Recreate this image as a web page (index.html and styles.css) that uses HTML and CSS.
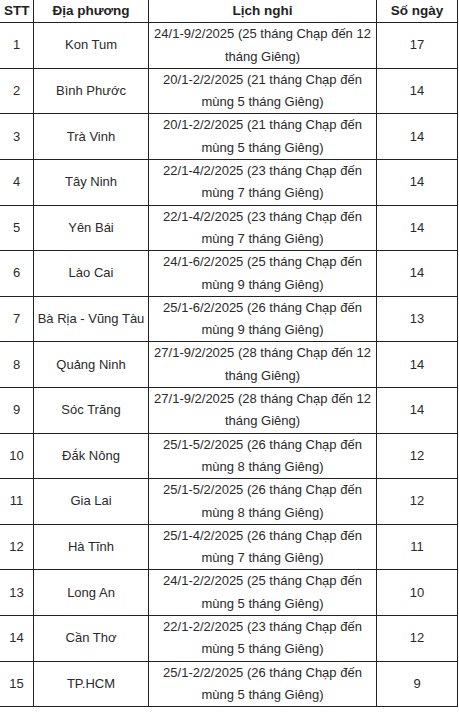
FILE: index.html
```html
<!DOCTYPE html>
<html lang="vi">
<head>
<meta charset="utf-8">
<link rel="stylesheet" href="styles.css">
</head>
<body>
<table class="tbl">
<colgroup>
<col class="c1"><col class="c2"><col class="c3"><col class="c4">
</colgroup>
<thead>
<tr><th>STT</th><th>Địa phương</th><th>Lịch nghỉ</th><th>Số ngày</th></tr>
</thead>
<tbody>
<tr><td>1</td><td>Kon Tum</td><td>24/1-9/2/2025 (25 tháng Chạp đến 12 tháng Giêng)</td><td>17</td></tr>
<tr><td>2</td><td>Bình Phước</td><td>20/1-2/2/2025 (21 tháng Chạp đến mùng 5 tháng Giêng)</td><td>14</td></tr>
<tr><td>3</td><td>Trà Vinh</td><td>20/1-2/2/2025 (21 tháng Chạp đến mùng 5 tháng Giêng)</td><td>14</td></tr>
<tr><td>4</td><td>Tây Ninh</td><td>22/1-4/2/2025 (23 tháng Chạp đến mùng 7 tháng Giêng)</td><td>14</td></tr>
<tr><td>5</td><td>Yên Bái</td><td>22/1-4/2/2025 (23 tháng Chạp đến mùng 7 tháng Giêng)</td><td>14</td></tr>
<tr><td>6</td><td>Lào Cai</td><td>24/1-6/2/2025 (25 tháng Chạp đến mùng 9 tháng Giêng)</td><td>14</td></tr>
<tr><td>7</td><td>Bà Rịa - Vũng Tàu</td><td>25/1-6/2/2025 (26 tháng Chạp đến mùng 9 tháng Giêng)</td><td>13</td></tr>
<tr><td>8</td><td>Quảng Ninh</td><td>27/1-9/2/2025 (28 tháng Chạp đến 12 tháng Giêng)</td><td>14</td></tr>
<tr><td>9</td><td>Sóc Trăng</td><td>27/1-9/2/2025 (28 tháng Chạp đến 12 tháng Giêng)</td><td>14</td></tr>
<tr><td>10</td><td>Đắk Nông</td><td>25/1-5/2/2025 (26 tháng Chạp đến mùng 8 tháng Giêng)</td><td>12</td></tr>
<tr><td>11</td><td>Gia Lai</td><td>25/1-5/2/2025 (26 tháng Chạp đến mùng 8 tháng Giêng)</td><td>12</td></tr>
<tr><td>12</td><td>Hà Tĩnh</td><td>25/1-4/2/2025 (26 tháng Chạp đến mùng 7 tháng Giêng)</td><td>11</td></tr>
<tr><td>13</td><td>Long An</td><td>24/1-2/2/2025 (25 tháng Chạp đến mùng 5 tháng Giêng)</td><td>10</td></tr>
<tr><td>14</td><td>Cần Thơ</td><td>22/1-2/2/2025 (23 tháng Chạp đến mùng 5 tháng Giêng)</td><td>12</td></tr>
<tr><td>15</td><td>TP.HCM</td><td>25/1-2/2/2025 (26 tháng Chạp đến mùng 5 tháng Giêng)</td><td>9</td></tr>
</tbody>
</table>
</body>
</html>
```
FILE: styles.css
```css
html, body {
  margin: 0;
  padding: 0;
  background: #fff;
}
body {
  font-family: "Liberation Sans", Arial, sans-serif;
  font-size: 13px;
  color: #2a2a2a;
}
.tbl {
  border-collapse: collapse;
  table-layout: fixed;
  width: 459px;
  margin: -1px 0 0 -1px;
}
.c1 { width: 34px; }
.c2 { width: 115px; }
.c3 { width: 228px; }
.c4 { width: 81px; }
.tbl th,
.tbl td {
  border: 1px solid #222;
  padding: 0 4px;
  line-height: 22.3px;
  text-align: center;
  vertical-align: middle;
}
.tbl td:nth-child(2) {
  padding: 0;
}
.tbl th {
  font-weight: bold;
  font-size: 13.5px;
  color: #222;
}
```
